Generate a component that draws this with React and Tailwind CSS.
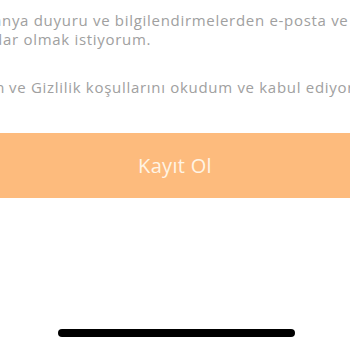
const FONT = { fontFamily: '"Open Sans", "Liberation Sans", sans-serif' };

function Prefix({ children }) {
  // zero-width box: its text spills out to the left and gets clipped by the page
  return <span className="inline-flex w-0 justify-end">{children}</span>;
}

export default function App() {
  return (
    <div className="flex h-[350px] w-[350px] flex-col overflow-hidden bg-white" style={FONT}>
      <div className="pt-[11px] text-[15px] leading-[19px] tracking-[0.7px] text-[#a0a0a0]">
        <p className="flex whitespace-nowrap pl-[2px]">
          <Prefix>Kampa</Prefix>
          <span>nya duyuru ve bilgilendirmelerden e-posta ve</span>
        </p>
        <p className="flex whitespace-nowrap pl-[3px]">
          <Prefix>SMS yoluyla haberd</Prefix>
          <span>ar olmak istiyorum.</span>
        </p>
        <p className="mt-[29px] flex whitespace-nowrap pl-[5px]">
          <Prefix>Üyelik Sözleşmesi, Aydınlatma Metni, Kullanım</Prefix>
          <span className="ml-[4px]">ve Gizlilik koşullarını okudum ve kabul ediyorum.</span>
        </p>
      </div>

      <button
        type="button"
        className="mt-[36px] flex h-[65px] w-full items-center justify-center bg-[#fdbb7d] text-[20px] font-medium tracking-[0.3px] text-[#fff4e4]"
      >
        Kayıt Ol
      </button>

      <div className="mt-auto flex justify-center pb-[13px]">
        <div className="ml-[2px] h-[8px] w-[237px] rounded-full bg-black" />
      </div>
    </div>
  );
}
